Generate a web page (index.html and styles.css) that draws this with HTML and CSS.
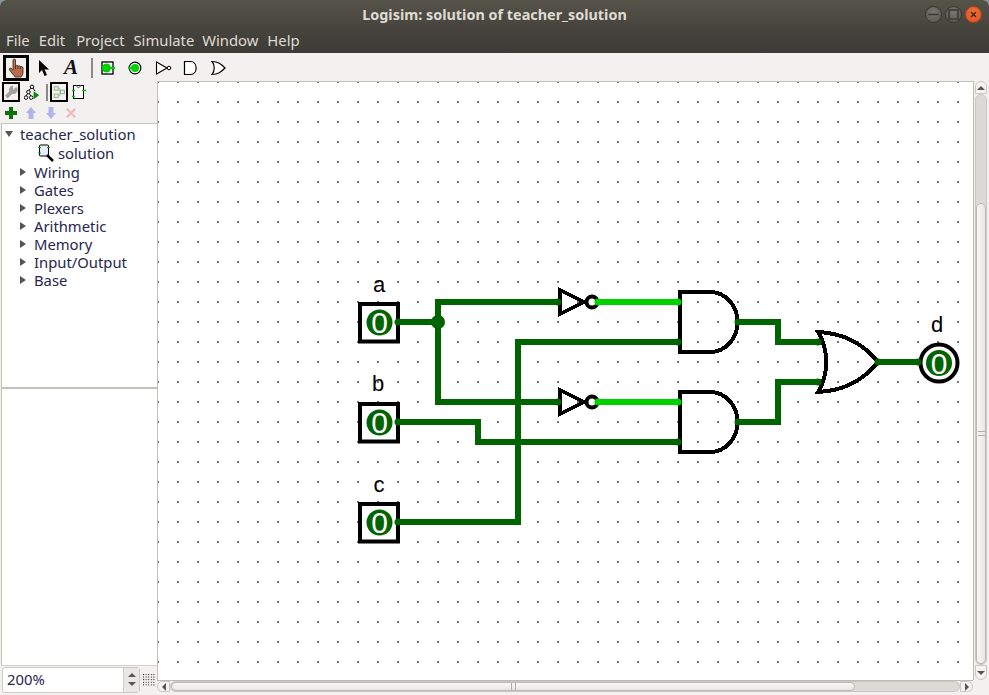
FILE: index.html
```html
<!DOCTYPE html>
<html lang="en">
<head>
<meta charset="utf-8">
<title>Logisim: solution of teacher_solution</title>
<link rel="stylesheet" href="styles.css">
</head>
<body>
<div class="window">
  <header class="chrome">
    <div class="titlebar">
      <span class="title">Logisim: solution of teacher_solution</span>
      <div class="controls">
        <span class="ctl"><svg width="15" height="15" viewBox="0 0 15 15"><path d="M2.500 7.500h10" stroke="#3a3935" stroke-width="1.500"/></svg></span>
        <span class="ctl"><svg width="15" height="15" viewBox="0 0 15 15"><rect x="3" y="3" width="9" height="9" fill="none" stroke="#3a3935" stroke-width="1.500"/></svg></span>
        <span class="ctl close"><svg width="15" height="15" viewBox="0 0 15 15"><path d="M5 5l5 5M10 5l-5 5" stroke="#4a2a12" stroke-width="1.500"/></svg></span>
      </div>
    </div>
    <nav class="menubar">
      <span>File</span><span>Edit</span><span class="m-project">Project</span><span>Simulate</span><span class="m-window">Window</span><span>Help</span>
    </nav>
  </header>

  <div class="toolbar">
    <span class="tool selected hand"><svg width="19" height="20" viewBox="0 0 18 20"><path d="M5.500 2C5.500.8 8 .8 8 2V8C8.500 7 10.500 7 10.500 8.500 11 7.500 13 7.700 13 9 13.500 8.300 15.500 8.500 15.500 10V14C15.500 16.500 14.500 18 13.500 19H7.500C6.500 17.500 4 14.500 2 12 1 10.500 3 9.500 4 10.500L5.500 12Z" fill="#bb6c4e" stroke="#3a2418" stroke-width=".8"/><path d="M8 8v3M10.500 8.500V11M13 9v2" stroke="#3a2418" stroke-width=".8" fill="none"/></svg></span>
    <span class="tool"><svg width="16" height="20" viewBox="0 0 16 20"><path d="M4 2v13l3-3 2.500 6 2.500-1-2.500-5.500H14z" fill="#000"/></svg></span>
    <span class="tool atool">A</span>
    <span class="sep"></span>
    <span class="tool"><svg width="22" height="22" viewBox="0 0 22 22"><rect x="6" y="5" width="11" height="12" fill="#fff" stroke="#000" stroke-width="1.300"/><circle cx="10.500" cy="11" r="4.500" fill="#00d200"/><path d="M12 11h7" stroke="#00d200" stroke-width="2"/></svg></span>
    <span class="tool"><svg width="22" height="22" viewBox="0 0 22 22"><circle cx="11" cy="11" r="5.800" fill="#fff" stroke="#000" stroke-width="1.200"/><circle cx="11" cy="11" r="4" fill="#00d200"/><path d="M4 11h6" stroke="#00d200" stroke-width="2"/></svg></span>
    <span class="tool"><svg width="22" height="22" viewBox="0 0 22 22"><path d="M4.500 5v12L15 11z" fill="#fff" stroke="#000" stroke-width="1.100"/><circle cx="17" cy="11" r="1.800" fill="#fff" stroke="#000"/></svg></span>
    <span class="tool"><svg width="22" height="22" viewBox="0 0 22 22"><path d="M4.500 4.500h6c7.500 0 7.500 13 0 13h-6z" fill="#fff" stroke="#000" stroke-width="1.200"/></svg></span>
    <span class="tool"><svg width="22" height="22" viewBox="0 0 22 22"><path d="M4 4.500c6 0 9 2.500 13 6.500-4 4-7 6.500-13 6.500 3-3.500 3-9.500 0-13z" fill="#fff" stroke="#000" stroke-width="1.200"/></svg></span>
  </div>

  <div class="workspace">
    <aside class="side">
      <div class="siderow tabs">
        <span class="tab selected"><svg width="15" height="16" viewBox="0 0 18 18"><path d="M3 15.500L10 8.500" stroke="#a0a0a0" stroke-width="5" fill="none"/><circle cx="12" cy="6" r="5.500" fill="#a0a0a0"/><path d="M12 6L18 0H11.500z" fill="#f2f1f0"/></svg></span>
        <span class="tab"><svg width="16" height="16" viewBox="0 0 20 20"><g fill="#fff" stroke="#000" stroke-width="1.200"><circle cx="10" cy="3.500" r="2.200"/><circle cx="5.500" cy="10" r="2.200"/><circle cx="2.500" cy="17" r="2.200"/><circle cx="9" cy="17" r="2.200"/></g><path d="M9 5l-3 3M4.500 12l-2 3M6.500 12l2 3M11 5l3 4" stroke="#000" fill="none" stroke-width="1.200"/><path d="M12 9l7 5-7 5z" fill="#0a8a0a"/></svg></span>
        <span class="sep small"></span>
        <span class="tab selected"><svg width="14" height="15" viewBox="0 0 18 18"><g fill="#e8f2e8" stroke="#8fb58f" stroke-width="1.300"><rect x="3" y="1.500" width="5" height="4.500"/><rect x="3" y="11" width="5" height="4.500"/><rect x="11" y="6" width="5" height="4.500"/></g><path d="M8 4h2v4h1M8 13h2V9" fill="none" stroke="#8fb58f"/></svg></span>
        <span class="tab"><svg width="18" height="18" viewBox="0 0 18 18"><rect x="2.500" y="2.500" width="10" height="13" fill="#fff" stroke="#000"/><path d="M5.500 2.500a2 2 0 0 0 4 0" fill="none" stroke="#777"/><path d="M1 7.500h3M1 13.500h3M11 7.500h4" stroke="#00c800" stroke-width="1.500"/></svg></span>
      </div>
      <div class="siderow actions">
        <span class="act"><svg width="14" height="14" viewBox="0 0 14 14"><path d="M5 1h4v4h4v4H9v4H5V9H1V5h4z" fill="#0a720a"/></svg></span>
        <span class="act"><svg width="14" height="14" viewBox="0 0 14 14"><path d="M7 1l5 6H9.500v6h-5V7H2z" fill="#b0b4ee"/></svg></span>
        <span class="act"><svg width="14" height="14" viewBox="0 0 14 14"><path d="M7 13l5-6H9.500V1h-5v6H2z" fill="#b0b4ee"/></svg></span>
        <span class="act"><svg width="14" height="14" viewBox="0 0 14 14"><path d="M2 3.500L3.500 2 7 5.500 10.500 2 12 3.500 8.500 7 12 10.500 10.500 12 7 8.500 3.500 12 2 10.500 5.500 7z" fill="#f0b8b8"/></svg></span>
      </div>
      <div class="tree">
        <div class="node root"><span class="tri open"></span>teacher_solution</div>
        <div class="node leaf"><svg class="leaficon" width="18" height="18" viewBox="0 0 18 18"><rect x="2.500" y="1" width="9" height="11" rx="1" fill="#e8ecfa" stroke="#000"/><path d="M1 3.500h3M1 9h3M10 3.500h3" stroke="#00b000"/><path d="M10 11l6 6" stroke="#000" stroke-width="2.500"/></svg>solution</div>
        <div class="node"><span class="tri"></span>Wiring</div>
        <div class="node"><span class="tri"></span>Gates</div>
        <div class="node"><span class="tri"></span>Plexers</div>
        <div class="node"><span class="tri"></span>Arithmetic</div>
        <div class="node"><span class="tri"></span>Memory</div>
        <div class="node"><span class="tri"></span>Input/Output</div>
        <div class="node"><span class="tri"></span>Base</div>
      </div>
      <div class="attrs"></div>
      <div class="zoombar">
        <div class="spin">
          <span class="zoomval">200%</span>
          <span class="spinbtns"><i class="up"></i><i class="down"></i></span>
        </div>
        <svg class="gridicon" width="12" height="12" viewBox="0 0 12 12"><pattern id="g" width="2.600" height="2.600" patternUnits="userSpaceOnUse"><rect width="1" height="1" fill="#111"/></pattern><rect width="12" height="12" fill="url(#g)"/></svg>
      </div>
    </aside>

    <main class="canvaswrap">
      <div class="canvasrow">
        <div class="canvasframe">
          <svg class="canvas" width="815" height="598" viewBox="158 82 815 598">
            <defs>
              <pattern id="dots" x="157" y="81" width="20" height="20" patternUnits="userSpaceOnUse"><rect width="2" height="2" fill="#777"/></pattern>
            </defs>
            <rect x="158" y="82" width="815" height="598" fill="#fff"/>
            <rect x="158" y="82" width="815" height="598" fill="url(#dots)"/>

            <g class="wires">
              <path d="M398 322H438M558 302H438V402H558"/>
              <path d="M398 422H478V442H678"/>
              <path d="M398 522H518V342H678"/>
              <path d="M738 322H778V342H818"/>
              <path d="M738 422H778V382H818"/>
              <path d="M878 362H918"/>
            </g>
            <circle class="junction" cx="438" cy="322" r="7"/>

            <g class="gate">
              <path d="M560 290V314L584 302Z"/>
              <circle cx="592" cy="302" r="5.500"/>
              <path d="M560 390V414L584 402Z"/>
              <circle cx="592" cy="402" r="5.500"/>
              <path d="M710 292H680V352H710C726 352 737.500 338 737.500 322C737.500 306 726 292 710 292Z"/>
              <path d="M710 392H680V452H710C726 452 737.500 438 737.500 422C737.500 406 726 392 710 392Z"/>
              <path d="M818 332C840 333 862 342 878 362C862 382 840 391 818 392C829 374 829 350 818 332Z"/>
            </g>

            <path class="live" d="M598 302H678M598 402H678"/>
            <g class="ends">
              <circle cx="558" cy="302" r="3.500"/><circle cx="558" cy="402" r="3.500"/>
              <circle cx="678" cy="342" r="3.500"/><circle cx="678" cy="442" r="3.500"/>
              <circle cx="738" cy="322" r="3.500"/><circle cx="738" cy="422" r="3.500"/>
              <circle cx="818" cy="342" r="3.500"/><circle cx="818" cy="382" r="3.500"/>
              <circle cx="878" cy="362" r="3.500"/>
            </g>
            <g class="ends liveends">
              <circle cx="598" cy="302" r="3.500"/><circle cx="598" cy="402" r="3.500"/>
              <circle cx="678" cy="302" r="3.500"/><circle cx="678" cy="402" r="3.500"/>
            </g>

            <g class="pinbox">
              <rect x="360" y="304" width="38" height="37.500"/>
              <rect x="360" y="404" width="38" height="37.500"/>
              <rect x="360" y="504" width="38" height="37.500"/>
              <circle cx="939" cy="363" r="18.500"/>
            </g>
            <g class="ends">
              <circle cx="398" cy="322" r="3.500"/><circle cx="398" cy="422" r="3.500"/><circle cx="398" cy="522" r="3.500"/>
              <circle cx="918" cy="362" r="3.500"/>
            </g>
            <g class="val">
              <circle cx="379.500" cy="322.500" r="13"/><text x="379.500" y="333">0</text>
              <circle cx="379.500" cy="422.500" r="13"/><text x="379.500" y="433">0</text>
              <circle cx="379.500" cy="522.500" r="13"/><text x="379.500" y="533">0</text>
              <circle cx="939" cy="363" r="13"/><text x="939" y="373.500">0</text>
            </g>
            <g class="labels">
              <text x="379" y="292">a</text>
              <text x="378" y="391">b</text>
              <text x="379" y="492">c</text>
              <text x="937" y="332">d</text>
            </g>
          </svg>
        </div>
        <div class="vscroll">
          <span class="vbtn"><i class="up"></i></span>
          <div class="vtrack"><div class="vthumb"><b></b></div></div>
          <span class="vbtn"><i class="down"></i></span>
        </div>
      </div>
      <div class="hscroll">
        <span class="hbtn"><i class="left"></i></span>
        <div class="htrack"><div class="hthumb"><b></b></div></div>
        <span class="hbtn"><i class="right"></i></span>
      </div>
    </main>
  </div>
</div>
</body>
</html>
```

FILE: styles.css
```css
* { box-sizing: border-box; }
html, body { margin: 0; height: 100%; background: #7e99a8; overflow: hidden; }
body { font-family: "Noto Sans", "Open Sans", sans-serif; }
.window { width: 989px; height: 695px; display: flex; flex-direction: column; background: #f2f1f0; border-radius: 6px 6px 0 0; overflow: hidden; }

.chrome { height: 53px; background: linear-gradient(#565349 0, #45433c 30px, #3c3b37 53px); flex: none; }
.titlebar { height: 30px; position: relative; display: flex; align-items: center; justify-content: center; }
.title { color: #dfdbd2; font-size: 14.400px; font-weight: 700; line-height: 30px; }
.controls { position: absolute; right: 7px; top: 6px; display: flex; gap: 3px; }
.ctl { width: 17px; height: 17px; border-radius: 50%; background: radial-gradient(circle at 50% 35%, #77756d, #57554e); border: 1px solid #37362f; display: flex; align-items: center; justify-content: center; flex: none; }
.close { background: radial-gradient(circle at 50% 35%, #f0703c, #dd4f1f); border-color: #a5431c; }
.menubar { height: 23px; display: flex; gap: 9px; padding-left: 6px; color: #dfdbd2; font-size: 14.800px; line-height: 20px; }
.m-project { margin-left: 2px; }
.m-window { margin-left: -1px; }

.toolbar { height: 28px; flex: none; display: flex; align-items: center; padding: 1px 0 0 3px; }
.tool { width: 24px; height: 26px; display: flex; align-items: center; justify-content: center; flex: none; margin-right: 4px; }
.tool.hand { width: 26px; margin-right: 2px; padding: 0; }
.selected { border: 3px solid #000; }
.atool { font-family: "Liberation Serif", serif; font-weight: 700; font-style: italic; font-size: 21px; color: #111; margin-right: 8px; }
.sep { width: 2px; height: 20px; background: #8a8a8a; flex: none; margin-right: 2px; }
.sep.small { height: 17px; margin: 0 2px; }

.workspace { flex: 1; display: flex; min-height: 0; }
.side { width: 157px; flex: none; display: flex; flex-direction: column; padding-left: 1px; }
.siderow { flex: none; display: flex; align-items: center; }
.tabs { height: 22px; padding-left: 1px; }
.tab { width: 18px; height: 20px; display: flex; align-items: center; justify-content: center; margin-right: 3px; flex: none; }
.tab.selected { height: 20px; border: 2px solid #000; }
.actions { height: 20px; padding-left: 3px; gap: 6px; }
.act { width: 14px; height: 14px; display: flex; }
.tree { height: 264px; flex: none; background: #fff; border-top: 1px solid #c9c6c1; border-left: 1px solid #c4c0ba; font-size: 14.800px; color: #26264e; }
.node { height: 18px; line-height: 18px; position: relative; display: flex; align-items: center; margin-left: 12px; padding-left: 20px; }
.node.root { margin-left: 0; padding-left: 18px; height: 19px; }
.node.leaf { margin-left: 0; padding-left: 35px; height: 20px; gap: 3px; }
.tri { position: absolute; left: 6px; top: 5px; width: 0; height: 0; border-left: 6px solid #555; border-top: 4px solid transparent; border-bottom: 4px solid transparent; }
.tri.open { left: 3px; top: 7px; border-top: 6px solid #555; border-left: 4px solid transparent; border-right: 4px solid transparent; border-bottom: 0; }
.attrs { flex: 1; background: #fff; border-top: 2px solid #c4c0ba; border-left: 1px solid #c4c0ba; min-height: 0; }
.zoombar { height: 30px; flex: none; display: flex; align-items: center; padding: 0 0 2px 1px; gap: 3px; border-top: 1px solid #d5d2cd; }
.spin { width: 138px; height: 26px; border: 1px solid #cdcac5; border-radius: 3px; background: #fff; display: flex; align-items: center; }
.zoomval { flex: 1; padding: 0 0 2px 4px; font-size: 14.800px; line-height: 20px; color: #26264e; }
.spinbtns { width: 16px; height: 100%; background: #e9e8e6; border-left: 1px solid #d3d0cb; display: flex; flex-direction: column; align-items: center; justify-content: center; gap: 5px; }
.gridicon { flex: none; }

i { display: block; width: 0; height: 0; }
.up { border-left: 4px solid transparent; border-right: 4px solid transparent; border-bottom: 4px solid #555; }
.down { border-left: 4px solid transparent; border-right: 4px solid transparent; border-top: 4px solid #555; }
.left { border-top: 4px solid transparent; border-bottom: 4px solid transparent; border-right: 4px solid #555; }
.right { border-top: 4px solid transparent; border-bottom: 4px solid transparent; border-left: 4px solid #555; }

.canvaswrap { flex: 1; display: flex; flex-direction: column; min-width: 0; }
.canvasrow { flex: 1; display: flex; min-height: 0; }
.canvasframe { flex: none; width: 816px; height: 599px; border-top: 1px solid #c4c0ba; border-left: 1px solid #c4c0ba; }
.canvas { display: block; }
.wires path { fill: none; stroke: #006400; stroke-width: 6; stroke-linecap: square; stroke-linejoin: miter; }
.junction { fill: #006400; }
.live { fill: none; stroke: #00d200; stroke-width: 6; }
.ends circle { fill: #006400; }
.liveends circle { fill: #00d200; }
.gate path { fill: none; stroke: #000; stroke-width: 4; shape-rendering: crispEdges; }
.gate circle { fill: none; stroke: #000; stroke-width: 4; }
.pinbox rect, .pinbox circle { fill: #fff; stroke: #000; stroke-width: 4; }
.val circle { fill: #006400; }
.val text { fill: #fff; font-family: "Liberation Sans", sans-serif; font-size: 30px; text-anchor: middle; }
.labels text { fill: #000; font-family: "Liberation Sans", sans-serif; font-size: 22px; text-anchor: middle; }

.vscroll { width: 16px; flex: none; display: flex; flex-direction: column; padding: 0 2px 0 1px; border-left: 1px solid #bdb9b3; }
.vbtn { height: 13px; flex: none; display: flex; align-items: center; justify-content: center; border: 1px solid #cac7c2; border-radius: 7px 7px 0 0; background: #f4f3f2; }
.vbtn:last-child { height: 15px; border-radius: 0 0 7px 7px; }
.vtrack { flex: 1; display: flex; flex-direction: column; justify-content: flex-end; border-radius: 7px; background: #dcdad7; border: 1px solid #cac7c2; }
.vthumb { height: 461px; background: linear-gradient(90deg, #f8f7f6, #e8e7e5); border-radius: 6px; border: 1px solid #bdb9b3; display: flex; align-items: center; justify-content: center; }
.vthumb b { width: 7px; height: 5px; border-top: 1px solid #b0aca6; border-bottom: 1px solid #b0aca6; }
.hscroll { height: 15px; flex: none; display: flex; width: 816px; border-top: 1px solid #bdb9b3; padding-bottom: 3px; }
.hbtn { width: 13px; flex: none; display: flex; align-items: center; justify-content: center; border: 1px solid #cac7c2; border-radius: 7px 0 0 7px; background: #f4f3f2; }
.hbtn:last-child { border-radius: 0 7px 7px 0; }
.htrack { flex: 1; display: flex; border-radius: 7px; border: 1px solid #cac7c2; background: #dcdad7; }
.hthumb { width: 684px; background: linear-gradient(#f8f7f6, #e8e7e5); border-radius: 6px; border: 1px solid #bdb9b3; display: flex; align-items: center; justify-content: center; }
.hthumb b { width: 5px; height: 7px; border-left: 1px solid #b0aca6; border-right: 1px solid #b0aca6; }
```
